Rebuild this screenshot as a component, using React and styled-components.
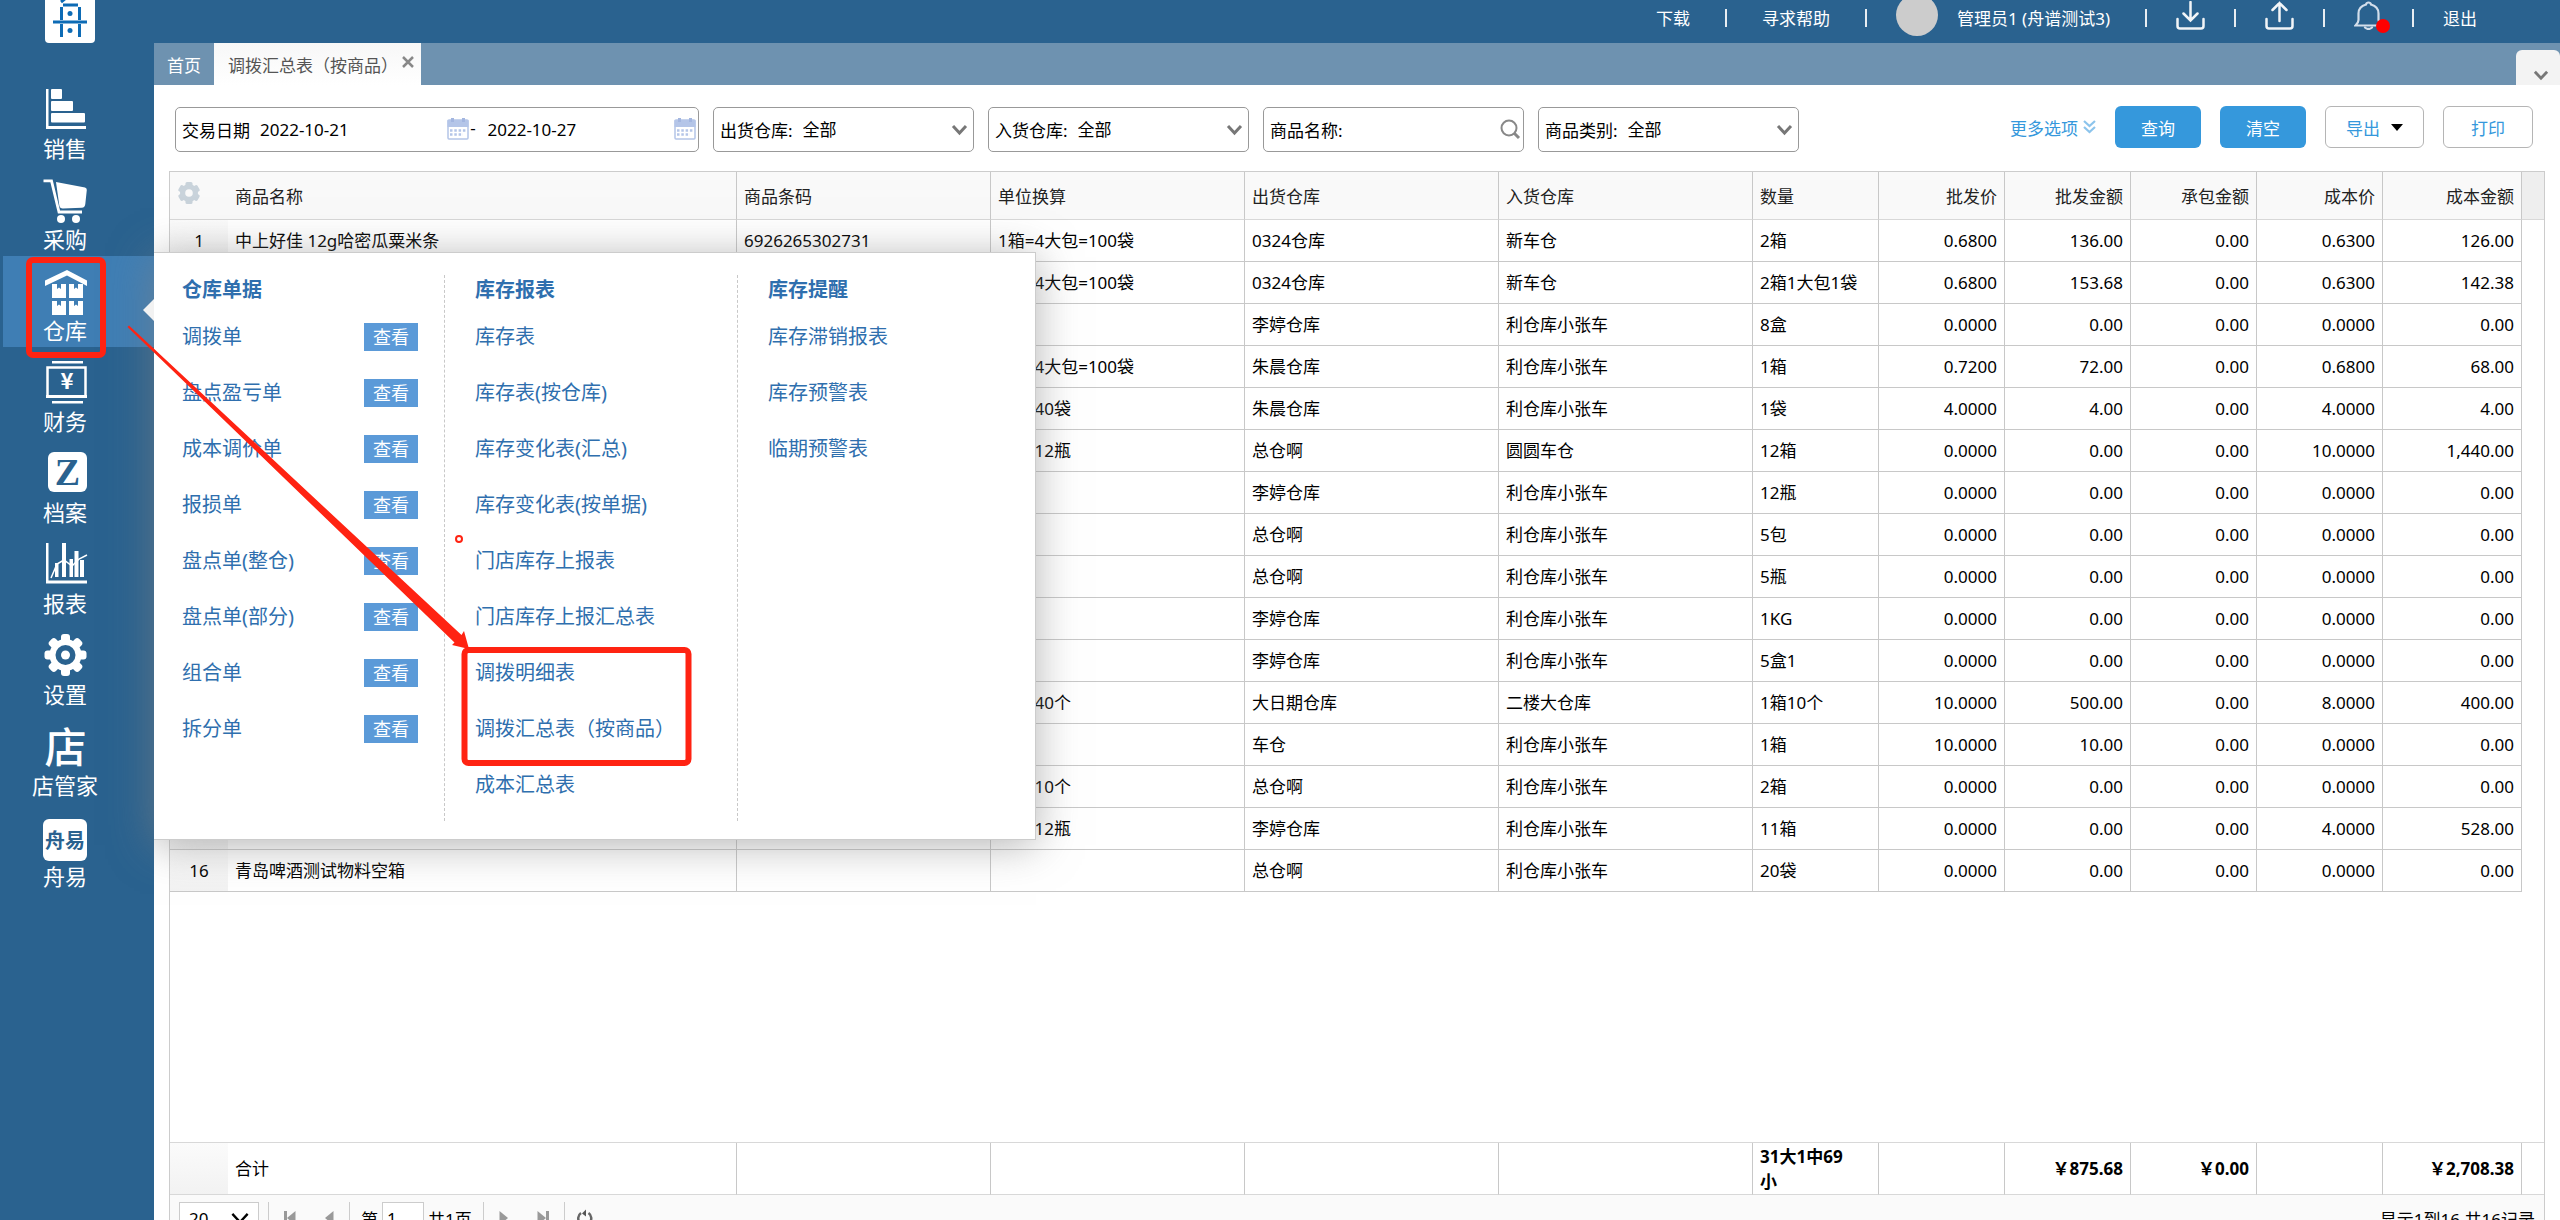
import React, { useState } from 'react';
import styled, { createGlobalStyle, css } from 'styled-components';

const GlobalStyle = createGlobalStyle`
  * {
    box-sizing: border-box;
  }
  body {
    margin: 0;
    overflow: hidden;
    background: #fff;
  }
  body, button, input, select {
    font-family: "Noto Sans", "Noto Sans CJK SC", sans-serif;
    font-size: 17px;
    color: #000;
  }
  button {
    padding: 0;
    border: 0;
    background: none;
    cursor: pointer;
  }
  a {
    text-decoration: none;
  }
  svg {
    display: block;
    flex: none;
  }
`;

const Page = styled.div`
  height: 100vh;
  overflow: hidden;
`;

/* the logo runs over the top edge and the pager over the bottom one */
const Shell = styled.div`
  display: flex;
  height: calc(100vh + 42px);
  margin-top: -20px;
`;

const Sidebar = styled.aside`
  flex: none;
  width: 154px;
  background: #2a628f;
`;

const Logo = styled.a`
  display: block;
  width: 50px;
  margin: 13px 0 31px 45px;
`;

const NavItem = styled.div`
  position: relative;
  height: 91px;
  margin-left: 3px;
  background: ${props => props.$active ? '#3f7eb4' : 'transparent'};
`;

const NavButton = styled.button`
  display: flex;
  flex-direction: column;
  align-items: center;
  width: 100%;
  height: 100%;
  padding: 14px 27px 0 0;
  color: #fff;
  font-size: 22px;
  line-height: 28px;
`;

const Main = styled.div`
  flex: 1;
  min-width: 0;
  display: flex;
  flex-direction: column;
`;

const TopBar = styled.header`
  flex: none;
  display: flex;
  justify-content: flex-end;
  align-items: center;
  height: 63px;
  padding: 12px 54px 0 0;
  background: #2a628f;
`;

const TopItem = styled.div`
  display: flex;
  align-items: center;
  height: 18px;
  padding: 0 ${props => props.$wide ? 35 : 29}px;
  border-left: ${props => props.$first ? '0' : '2px solid #e8edf2'};
  a, span, button {
    color: #fff;
    white-space: nowrap;
  }
`;

const Avatar = styled.div`
  flex: none;
  width: 42px;
  height: 42px;
  margin: 0 19px 5px -6px;
  border-radius: 50%;
  background: #ccc;
`;

const IconButton = styled.button`
  position: relative;
  display: block;
  margin-bottom: 4px;
`;

const RedDot = styled.i`
  position: absolute;
  right: -7px;
  bottom: -3px;
  width: 14px;
  height: 14px;
  border-radius: 50%;
  background: #f00;
`;

const TabBar = styled.nav`
  flex: none;
  display: flex;
  height: 42px;
  background: #6e92b0;
`;

const Tab = styled.div`
  display: flex;
  align-items: center;
  padding: 0 ${props => props.$active ? 7 : 13}px;
  padding-left: ${props => props.$active ? 14 : 13}px;
  background: ${props => props.$active ? 'linear-gradient(#f7f7f7, #fff)' : 'transparent'};
  a {
    color: ${props => props.$active ? '#555' : '#fff'};
  }
  button {
    margin: 0 0 4px 4px;
  }
`;

const TabsMenu = styled.button`
  display: flex;
  align-items: center;
  width: 44px;
  height: 35px;
  margin: 7px 0 0 auto;
  padding: 14px 0 0 17px;
  border-radius: 6px 6px 0 0;
  background: #f3f3f3;
`;

const Filters = styled.form`
  flex: none;
  display: flex;
  align-items: center;
  gap: 14px;
  padding: 21px 27px 19px 21px;
`;

const Field = styled.div`
  display: flex;
  align-items: center;
  position: relative;
  width: ${props => props.$wide ? 524 : 261}px;
  height: 45px;
  padding: 0 2px 0 6px;
  border: 1px solid #999;
  border-radius: 5px;
  label, span {
    flex: none;
  }
  input, select {
    flex: 1;
    min-width: 0;
    height: 40px;
    padding: 0 0 0 10px;
    border: 0;
    outline: 0;
    background: transparent;
    appearance: none;
  }
  > svg {
    pointer-events: none;
  }
  select + svg {
    margin-right: 3px;
  }
`;

const Dash = styled.span`
  width: 9px;
  padding-bottom: 4px;
  text-align: center;
`;

const Actions = styled.div`
  display: flex;
  align-items: center;
  gap: 19px;
  margin-left: auto;
  padding-bottom: 4px;
`;

const MoreLink = styled.a`
  display: flex;
  align-items: center;
  gap: 5px;
  color: #3598dc;
`;

const Button = styled.button`
  display: flex;
  align-items: center;
  justify-content: center;
  gap: 11px;
  min-width: ${props => props.$primary ? 86 : 90}px;
  height: 42px;
  padding: 0 20px;
  border-radius: 6px;
  ${props => props.$primary ? css`
    background: #3598dc;
    color: #fff;
  ` : css`
    border: 1px solid #b5b5b5;
    background: #fff;
    color: #3598dc;
  `}
`;

const Grid = styled.section`
  flex: 1;
  display: flex;
  flex-direction: column;
  margin: 0 15px;
  border: 1px solid #ccc;
`;

const Table = styled.table`
  width: 100%;
  table-layout: fixed;
  border-collapse: separate;
  border-spacing: 0;
  th, td {
    height: 42px;
    padding: 0 7px;
    border-right: 1px solid #c8c8c8;
    border-bottom: 1px solid #c8c8c8;
    text-align: left;
    font-weight: 400;
    line-height: 26px;
    white-space: nowrap;
  }
  th {
    height: 48px;
    padding-top: 2px;
    background: #f9f9f9;
    color: #222;
    border-bottom-color: #d8d8d8;
  }
  th:first-child, td:first-child {
    border-right: 0;
  }
  td:first-child {
    background: linear-gradient(#fbfbfb, #f2f2f2);
    text-align: center;
  }
  th:last-child, td:last-child {
    border-right: 0;
  }
  td:last-child {
    border-bottom: 0;
  }
  th:last-child {
    background: #eee;
  }
  th:nth-child(n+8), td:nth-child(n+8) {
    text-align: right;
  }
`;

const TotalTable = styled(Table)`
  border-top: 1px solid #d8d8d8;
  td {
    height: 52px;
    border-bottom-color: #d8d8d8;
    font-weight: 700;
    line-height: 25px;
    white-space: pre-line;
  }
  td:nth-child(2) {
    font-weight: 400;
  }
  td:last-child {
    border-bottom: 1px solid #d8d8d8;
  }
`;

const Blank = styled.div`
  flex: 1;
`;

const Pager = styled.footer`
  flex: none;
  display: flex;
  align-items: center;
  height: 46px;
  padding: 0 9px;
  background: #fafafa;
`;

const PageSize = styled.div`
  display: flex;
  align-items: center;
  position: relative;
  width: 80px;
  height: 33px;
  margin-right: 9px;
  border: 1px solid #ccc;
  background: #fff;
  select {
    width: 100%;
    height: 31px;
    padding: 0 0 0 9px;
    border: 0;
    background: transparent;
    appearance: none;
  }
  svg {
    position: absolute;
    right: 8px;
    pointer-events: none;
  }
`;

const PagerGroup = styled.div`
  display: flex;
  align-items: center;
  gap: ${props => props.$gap || 4}px;
  height: 32px;
  padding: 0 ${props => props.$gap ? 15 : 11}px;
  border-left: 1px solid #ccc;
  label {
    display: flex;
    align-items: center;
    gap: 4px;
  }
  input {
    width: 42px;
    height: 33px;
    padding: 0 4px;
    border: 1px solid #ccc;
  }
`;

const PageInfo = styled.div`
  margin-left: auto;
`;

const Menu = styled.div`
  position: absolute;
  left: 151px;
  top: -4px;
  z-index: 10;
  display: flex;
  width: 882px;
  padding: 22px 0 18px 28px;
  border: 1px solid #ccc;
  border-left: 0;
  background: #fff;
  box-shadow: 0 5px 40px rgba(130, 130, 130, 0.6);
`;

const MenuPointer = styled.i`
  position: absolute;
  left: -11px;
  top: 46px;
  border: solid transparent;
  border-width: 11px 11px 11px 0;
  border-right-color: #f2f2f2;
`;

const MenuColumn = styled.section`
  width: ${props => props.$width}px;
  min-height: 546px;
  & + & {
    padding-left: 30px;
    border-left: 1px dashed #c8c8c8;
  }
  h3 {
    margin: 0 0 4px;
    font-size: 20px;
    line-height: 30px;
    color: #2f6fae;
  }
`;

const MenuRow = styled.div`
  display: flex;
  align-items: center;
  justify-content: space-between;
  height: 56px;
  padding-right: 26px;
  font-size: 20px;
  line-height: 28px;
  white-space: nowrap;
  a {
    color: #2f6fae;
  }
`;

const ViewButton = styled.button`
  width: 54px;
  height: 28px;
  background: #5b9ad8;
  color: #fff;
  font-size: 18px;
  line-height: 26px;
`;

const Marks = styled.svg`
  position: absolute;
  left: 0;
  top: 0;
  z-index: 20;
  pointer-events: none;
`;

const NavSvg = styled.svg`
  overflow: visible;
`;

const IconText = styled.text`
  font-family: ${props => props.$serif ? '"Liberation Serif", serif' : '"Noto Sans CJK SC", sans-serif'};
  font-weight: ${props => props.$bold ? 700 : 500};
  text-anchor: middle;
`;

const NavIcon = ({ children }) => (
  <NavSvg width="44" height="46" viewBox="0 0 44 46" fill="#fff" stroke="none" aria-hidden="true">{children}</NavSvg>
);

const SalesIcon = () => (
  <NavIcon>
    <path d="M3 1h2.500v37h37.500v3h-40z" />
    <rect x="8" y="1" width="11" height="10" rx="1" />
    <rect x="8" y="13" width="22" height="10" rx="1" />
    <rect x="8" y="25" width="34" height="9.500" rx="1" />
  </NavIcon>
);

const CartIcon = () => (
  <NavIcon>
    <path d="M.5 1.800h8l7.500 31.200h23" fill="none" stroke="#fff" strokeWidth="2.800" />
    <path d="M13 3l29 5.500q2 .5 1.800 2.500l-1.500 14q-.3 3.500-3.500 3.800l-19 .7q-3 0-3.500-3z" />
    <circle cx="18" cy="40" r="4" />
    <circle cx="33" cy="40" r="4" />
  </NavIcon>
);

const StoreIcon = () => (
  <NavIcon>
    <path d="M24 0l20 10.500v5.500l-20-10.500-22 10.500v-5.500z" />
    <path d="M9 14h5v5l2-1.500 2 1.500v-5h5v14H9z" />
    <path d="M26 14h5v5l2-1.500 2 1.500v-5h5v14H26z" />
    <path d="M9 31h5v5l2-1.500 2 1.500v-5h5v14H9z" />
    <path d="M26 31h5v5l2-1.500 2 1.500v-5h5v14H26z" />
  </NavIcon>
);

const FinanceIcon = () => (
  <NavIcon>
    <rect x="9" y="0" width="31" height="2.500" />
    <rect x="4.500" y="6.500" width="38" height="29" fill="none" stroke="#fff" strokeWidth="2.500" />
    <rect x="3" y="34" width="41" height="3" />
    <rect x="9" y="40" width="31" height="2.500" />
    <IconText x="24" y="28" fontSize="22" $bold>¥</IconText>
  </NavIcon>
);

const FilesIcon = () => (
  <NavIcon>
    <rect x="5" y="0" width="39" height="40" rx="6" />
    <IconText x="24.500" y="33" fontSize="38" fill="#2a628f" $serif $bold>Z</IconText>
  </NavIcon>
);

const ReportIcon = () => (
  <NavIcon>
    <path d="M3 0h2.500v37.500h38.500v3h-41z" />
    <path d="M12 20h3.500v14h-3.500zM19 0h4v34h-4zM26.500 16h3.500v18h-3.500zM31.500 8h4v26h-4zM37 17h4v17h-4z" />
    <path d="M8 35l6-14 7-4 8 6 7-7 8-4" fill="none" stroke="#fff" strokeWidth="1.500" />
  </NavIcon>
);

const SettingsIcon = () => (
  <NavIcon>
    {[0, 45, 90, 135].map(angle => (
      <rect key={angle} x="18" y="0" width="9" height="42" rx="3" transform={`rotate(${angle} 22.5 21)`} />
    ))}
    <circle cx="22.500" cy="21" r="16" />
    <circle cx="22.500" cy="21" r="10" fill="#2a628f" />
    <circle cx="22.500" cy="21" r="4.500" />
  </NavIcon>
);

const ShopIcon = () => (
  <NavIcon>
    <IconText x="22.500" y="38" fontSize="42">店</IconText>
  </NavIcon>
);

const ZhouyiIcon = () => (
  <NavIcon>
    <rect x="0" y="3" width="44" height="42" rx="6" />
    <IconText x="22" y="32" fontSize="20" fill="#2a628f" $bold>舟易</IconText>
  </NavIcon>
);

const Chevron = ({ size = 17, color = '#777', width = 3 }) => (
  <svg width={size} height={size} viewBox="0 0 17 17" fill="none" stroke={color} strokeWidth={width} aria-hidden="true">
    <path d="M2 5l6.500 7 6.500-7" />
  </svg>
);

const CalendarIcon = () => (
  <svg width="22" height="22" viewBox="0 0 22 22" aria-hidden="true">
    <rect x="1" y="2" width="20" height="19" rx="1" fill="#fff" stroke="#b4c5e8" strokeWidth="1.500" />
    <path d="M.5 2h21v7h-21z" fill="#b4c5e8" />
    <path d="M4 0h3v4h-3zM15 0h3v4h-3z" fill="#a3b6e0" />
    <path d="M3 12.500h16M3 16.500h13" stroke="#b4c5e8" strokeWidth="2.500" strokeDasharray="2.500 1.800" />
  </svg>
);

const SearchIcon = () => (
  <svg width="21" height="21" viewBox="0 0 21 21" fill="none" stroke="#888" aria-hidden="true">
    <circle cx="9" cy="9" r="7.500" strokeWidth="2" />
    <path d="M14 14l5 5" strokeWidth="3" />
  </svg>
);

const GridGear = () => (
  <svg width="24" height="24" viewBox="0 0 24 24" fill="#c9d3db" aria-hidden="true">
    {[0, 60, 120].map(angle => (
      <rect key={angle} x="8.500" y="1" width="7" height="22" rx="1.500" transform={`rotate(${angle} 12 12)`} />
    ))}
    <circle cx="12" cy="12" r="9" />
    <circle cx="12" cy="12" r="3.800" fill="#f9f9f9" />
  </svg>
);

const TrayIcon = ({ up }) => (
  <svg width="29" height="29" viewBox="0 0 29 29" fill="none" stroke="#f2f5f8" strokeWidth="2.500" strokeLinecap="round" aria-hidden="true">
    <path d="M1.500 18v7q0 2.500 2.500 2.500h21q2.500 0 2.500-2.500v-7" />
    <path d={up ? 'M14.500 20v-18M7.500 9l7-7 7 7' : 'M14.500 1v18M7.500 12.500l7 7 7-7'} />
  </svg>
);

const BellIcon = () => (
  <svg width="29" height="29" viewBox="0 0 29 29" fill="none" stroke="#d3deeb" strokeWidth="2.200" strokeLinecap="round" aria-hidden="true">
    <path d="M14.500 1.500q-2 0-2.500 2-7.500 2-7.500 9v6.500q0 2.500-3 5.500h26q-3-3-3-5.500v-6.500q0-7-7.500-9-.5-2-2.500-2z" />
    <path d="M11 26.500q3.500 3 7 0" />
  </svg>
);

const PagerIcon = ({ flip, bar }) => (
  <svg width="12" height="14" viewBox="0 0 12 14" fill="#999" transform={flip ? 'scale(-1 1)' : undefined} aria-hidden="true">
    {bar && <rect x="0" y="0" width="3" height="14" />}
    <path d="M11.500 0v14l-8.500-7z" />
  </svg>
);

const navItems = [
  { label: '销售', Icon: SalesIcon },
  { label: '采购', Icon: CartIcon },
  { label: '仓库', Icon: StoreIcon },
  { label: '财务', Icon: FinanceIcon },
  { label: '档案', Icon: FilesIcon },
  { label: '报表', Icon: ReportIcon },
  { label: '设置', Icon: SettingsIcon },
  { label: '店管家', Icon: ShopIcon },
  { label: '舟易', Icon: ZhouyiIcon },
];

const menuColumns = [
  {
    title: '仓库单据',
    width: 262,
    view: true,
    items: ['调拨单', '盘点盈亏单', '成本调价单', '报损单', '盘点单(整仓)', '盘点单(部分)', '组合单', '拆分单'],
  },
  {
    title: '库存报表',
    width: 293,
    items: ['库存表', '库存表(按仓库)', '库存变化表(汇总)', '库存变化表(按单据)', '门店库存上报表', '门店库存上报汇总表', '调拨明细表', '调拨汇总表（按商品）', '成本汇总表'],
  },
  {
    title: '库存提醒',
    width: 290,
    items: ['库存滞销报表', '库存预警表', '临期预警表'],
  },
];

const headings = ['商品名称', '商品条码', '单位换算', '出货仓库', '入货仓库', '数量', '批发价', '批发金额', '承包金额', '成本价', '成本金额'];

const rows = [
  ['中上好佳 12g哈密瓜粟米条', '6926265302731', '1箱=4大包=100袋', '0324仓库', '新车仓', '2箱', '0.6800', '136.00', '0.00', '0.6300', '126.00'],
  ['', '', '1箱=4大包=100袋', '0324仓库', '新车仓', '2箱1大包1袋', '0.6800', '153.68', '0.00', '0.6300', '142.38'],
  ['', '', '', '李婷仓库', '利仓库小张车', '8盒', '0.0000', '0.00', '0.00', '0.0000', '0.00'],
  ['', '', '1箱=4大包=100袋', '朱晨仓库', '利仓库小张车', '1箱', '0.7200', '72.00', '0.00', '0.6800', '68.00'],
  ['', '', '1箱=40袋', '朱晨仓库', '利仓库小张车', '1袋', '4.0000', '4.00', '0.00', '4.0000', '4.00'],
  ['', '', '1箱=12瓶', '总仓啊', '圆圆车仓', '12箱', '0.0000', '0.00', '0.00', '10.0000', '1,440.00'],
  ['', '', '', '李婷仓库', '利仓库小张车', '12瓶', '0.0000', '0.00', '0.00', '0.0000', '0.00'],
  ['', '', '', '总仓啊', '利仓库小张车', '5包', '0.0000', '0.00', '0.00', '0.0000', '0.00'],
  ['', '', '', '总仓啊', '利仓库小张车', '5瓶', '0.0000', '0.00', '0.00', '0.0000', '0.00'],
  ['', '', '', '李婷仓库', '利仓库小张车', '1KG', '0.0000', '0.00', '0.00', '0.0000', '0.00'],
  ['', '', '', '李婷仓库', '利仓库小张车', '5盒1', '0.0000', '0.00', '0.00', '0.0000', '0.00'],
  ['', '', '1箱=40个', '大日期仓库', '二楼大仓库', '1箱10个', '10.0000', '500.00', '0.00', '8.0000', '400.00'],
  ['', '', '', '车仓', '利仓库小张车', '1箱', '10.0000', '10.00', '0.00', '0.0000', '0.00'],
  ['', '', '1箱=10个', '总仓啊', '利仓库小张车', '2箱', '0.0000', '0.00', '0.00', '0.0000', '0.00'],
  ['', '', '1箱=12瓶', '李婷仓库', '利仓库小张车', '11箱', '0.0000', '0.00', '0.00', '4.0000', '528.00'],
  ['青岛啤酒测试物料空箱', '', '', '总仓啊', '利仓库小张车', '20袋', '0.0000', '0.00', '0.00', '0.0000', '0.00'],
];

const totals = ['合计', '', '', '', '', '31大1中69\n小', '', '￥875.68', '￥0.00', '', '￥2,708.38'];

const Col = styled.col`
  width: ${props => props.$width ? props.$width + 'px' : 'auto'};
`;

const Columns = () => (
  <colgroup>
    {[58, 0, 254, 254, 254, 254, 126, 126, 126, 126, 126, 139, 22].map((width, i) => <Col key={i} $width={width} />)}
  </colgroup>
);

const SelectField = ({ id, label }) => (
  <Field>
    <label htmlFor={id}>{label}</label>
    <select id={id}><option>全部</option></select>
    <Chevron />
  </Field>
);

const WarehouseMenu = () => (
  <Menu>
    <MenuPointer />
    {menuColumns.map(column => (
      <MenuColumn key={column.title} $width={column.width}>
        <h3>{column.title}</h3>
        {column.items.map(item => (
          <MenuRow key={item}>
            <a href="#">{item}</a>
            {column.view && <ViewButton type="button">查看</ViewButton>}
          </MenuRow>
        ))}
      </MenuColumn>
    ))}
  </Menu>
);

const RedMarks = () => (
  <Marks width="720" height="790" fill="none" stroke="#ff2312" aria-hidden="true">
    <rect x="29" y="260" width="74" height="95" rx="4" strokeWidth="6" />
    <rect x="464.500" y="650" width="224" height="113" rx="4" strokeWidth="6" />
    <circle cx="459" cy="539" r="3" strokeWidth="2" />
    <path d="M127.500 327l1.500-1.500L461.500 635l2.500-4 5 18-17-4 2.500-2.500z" fill="#ff2312" stroke="none" />
  </Marks>
);

const App = () => {
  const [page, setPage] = useState('1');
  const [startDate, setStartDate] = useState('2022-10-21');
  const [endDate, setEndDate] = useState('2022-10-27');
  return (
    <Page>
      <GlobalStyle />
      <Shell>
        <Sidebar>
          <Logo href="#" aria-label="舟谱">
            <svg width="50" height="50" viewBox="0 0 50 50" fill="none" stroke="#0d6bb5" strokeWidth="3">
              <rect width="50" height="50" rx="4" fill="#fff" stroke="none" />
              <path d="M21 5l-5 4M18 12h15M16.500 14v13M34.500 14v13M8 29h34M16.500 31v13M34.500 31v13" />
              <circle cx="25" cy="20.500" r="2.500" fill="#0d6bb5" stroke="none" />
              <circle cx="25" cy="37.500" r="2.500" fill="#0d6bb5" stroke="none" />
            </svg>
          </Logo>
          {navItems.map(({ label, Icon }) => (
            <NavItem key={label} $active={label === '仓库'}>
              <NavButton type="button"><Icon />{label}</NavButton>
              {label === '仓库' && <WarehouseMenu />}
            </NavItem>
          ))}
        </Sidebar>
        <Main>
          <TopBar>
            <TopItem $wide $first><a href="#">下载</a></TopItem>
            <TopItem $wide><a href="#">寻求帮助</a></TopItem>
            <TopItem $wide><Avatar /><span>管理员1 (舟谱测试3)</span></TopItem>
            <TopItem><IconButton type="button" aria-label="下载"><TrayIcon /></IconButton></TopItem>
            <TopItem><IconButton type="button" aria-label="上传"><TrayIcon up /></IconButton></TopItem>
            <TopItem><IconButton type="button" aria-label="消息"><BellIcon /><RedDot /></IconButton></TopItem>
            <TopItem><a href="#">退出</a></TopItem>
          </TopBar>
          <TabBar>
            <Tab><a href="#">首页</a></Tab>
            <Tab $active>
              <a href="#">调拨汇总表（按商品）</a>
              <button type="button" aria-label="关闭">
                <svg width="12" height="12" viewBox="0 0 12 12" stroke="#888" strokeWidth="2.500"><path d="M1 1l10 10M11 1l-10 10" /></svg>
              </button>
            </Tab>
            <TabsMenu type="button" aria-label="全部标签"><Chevron size={16} /></TabsMenu>
          </TabBar>
          <Filters onSubmit={e => e.preventDefault()}>
            <Field $wide>
              <label htmlFor="start">交易日期</label>
              <input id="start" value={startDate} onChange={e => setStartDate(e.target.value)} />
              <CalendarIcon />
              <Dash>-</Dash>
              <input aria-label="结束日期" value={endDate} onChange={e => setEndDate(e.target.value)} />
              <CalendarIcon />
            </Field>
            <SelectField id="from" label="出货仓库:" />
            <SelectField id="to" label="入货仓库:" />
            <Field>
              <label htmlFor="goods">商品名称:</label>
              <input id="goods" />
              <SearchIcon />
            </Field>
            <SelectField id="category" label="商品类别:" />
            <Actions>
              <MoreLink href="#">
                更多选项
                <svg width="13" height="14" viewBox="0 0 13 14" fill="none" stroke="#8cc4ec" strokeWidth="2.200"><path d="M1 1l5.500 5 5.500-5M1 7l5.500 5 5.500-5" /></svg>
              </MoreLink>
              <Button type="submit" $primary>查询</Button>
              <Button type="reset" $primary>清空</Button>
              <Button type="button">
                导出
                <svg width="12" height="7" viewBox="0 0 12 7"><path d="M0 0h12l-6 7z" /></svg>
              </Button>
              <Button type="button">打印</Button>
            </Actions>
          </Filters>
          <Grid>
            <Table>
              <Columns />
              <thead>
                <tr>
                  <th><button type="button" aria-label="列设置"><GridGear /></button></th>
                  {headings.map(heading => <th key={heading}>{heading}</th>)}
                  <th />
                </tr>
              </thead>
              <tbody>
                {rows.map((row, i) => (
                  <tr key={i}>
                    <td>{i + 1}</td>
                    {row.map((cell, j) => <td key={j}>{cell}</td>)}
                    <td />
                  </tr>
                ))}
              </tbody>
            </Table>
            <Blank />
            <TotalTable>
              <Columns />
              <tbody>
                <tr>
                  <td />
                  {totals.map((cell, j) => <td key={j}>{cell}</td>)}
                  <td />
                </tr>
              </tbody>
            </TotalTable>
            <Pager>
              <PageSize>
                <select aria-label="每页条数"><option>20</option></select>
                <Chevron size={20} color="#000" width={2} />
              </PageSize>
              <PagerGroup $gap={26}>
                <button type="button" aria-label="首页"><PagerIcon bar /></button>
                <button type="button" aria-label="上一页"><PagerIcon /></button>
              </PagerGroup>
              <PagerGroup>
                <label>第<input value={page} onChange={e => setPage(e.target.value)} /></label>
                <span>共1页</span>
              </PagerGroup>
              <PagerGroup $gap={26}>
                <button type="button" aria-label="下一页"><PagerIcon flip /></button>
                <button type="button" aria-label="末页"><PagerIcon flip bar /></button>
              </PagerGroup>
              <PagerGroup>
                <button type="button" aria-label="刷新">
                  <svg width="18" height="18" viewBox="0 0 18 18" fill="none" stroke="#666" strokeWidth="2.500"><path d="M5 4a6.500 6.500 0 1 0 7.500 0" /><path d="M6 4.500l4-4v7z" fill="#555" stroke="none" /></svg>
                </button>
              </PagerGroup>
              <PageInfo>显示1到16,共16记录</PageInfo>
            </Pager>
          </Grid>
        </Main>
      </Shell>
      <RedMarks />
    </Page>
  );
};

export default App;
